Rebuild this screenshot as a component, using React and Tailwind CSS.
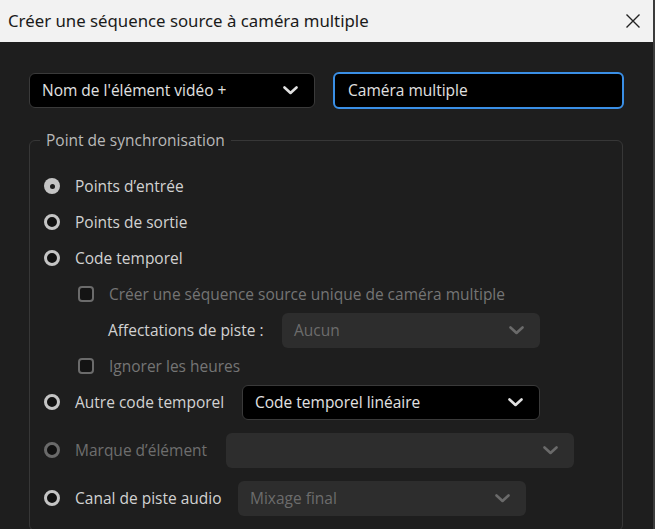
import React from 'react';

const FONT = { fontFamily: '"Open Sans", "Noto Sans", sans-serif' };

function Chevron({ dim }) {
  return (
    <svg width="15" height="9" viewBox="0 0 15 9" className={dim ? 'text-[#6a6a6a]' : 'text-[#e0e0e0]'}>
      <polyline points="1.5,1.5 7.5,7 13.5,1.5" fill="none" stroke="currentColor" strokeWidth="2.6" strokeLinecap="round" strokeLinejoin="round" />
    </svg>
  );
}

// menu déroulant, actif (noir) ou désactivé (gris)
function Select({ value, width, disabled }) {
  return (
    <div
      className={
        'h-[35px] shrink-0 flex items-center justify-between pl-3 pr-4 rounded-md text-[15.5px] ' +
        (disabled ? 'bg-[#2d2d2d] text-[#6c6c6c]' : 'bg-black border border-[#3a3a3a] text-[#e2e2e2]')
      }
      style={{ width }}
    >
      <span>{value}</span>
      <Chevron dim={disabled} />
    </div>
  );
}

function Radio({ checked, disabled }) {
  if (checked) {
    return (
      <span className="w-4 h-4 rounded-full bg-[#c4c4c4] flex items-center justify-center shrink-0">
        <span className="w-[5px] h-[5px] rounded-full bg-[#1c1c1c]" />
      </span>
    );
  }
  return (
    <span
      className={
        'w-4 h-4 rounded-full border-[3px] bg-[#111] shrink-0 ' +
        (disabled ? 'border-[#6a6a6a]' : 'border-[#c4c4c4]')
      }
    />
  );
}

function RadioRow({ label, checked, disabled, children, className = '' }) {
  return (
    <div className={'h-9 flex items-center ' + className}>
      <Radio checked={checked} disabled={disabled} />
      <span className={'ml-[15px] text-[15.5px] ' + (disabled ? 'text-[#6e6e6e]' : 'text-[#d2d2d2]')}>{label}</span>
      {children}
    </div>
  );
}

function CheckRow({ label }) {
  return (
    <div className="h-9 flex items-center pl-[34px]">
      <span className="w-4 h-4 rounded-[4px] border-2 border-[#6b6b6b] bg-[#141414] shrink-0" />
      <span className="ml-[15px] text-[15.5px] text-[#757575]">{label}</span>
    </div>
  );
}

export default function App() {
  return (
    <div className="w-[655px] h-[529px] overflow-hidden bg-[#1e1e1e] border-r-2 border-[#3c3c3c]" style={FONT}>
      {/* barre de titre */}
      <div
        className="h-[42px] bg-[#f2f2f2] flex items-center justify-between pl-2 pr-3"
        style={{ fontFamily: '"Noto Sans", "Open Sans", sans-serif' }}
      >
        <span className="text-[16.8px] text-[#1a1a1a]">Créer une séquence source à caméra multiple</span>
        <svg width="16" height="16" viewBox="0 0 16 16" className="text-[#222]">
          <path d="M1.5 1.5 L14.5 14.5 M14.5 1.5 L1.5 14.5" stroke="currentColor" strokeWidth="1.4" />
        </svg>
      </div>

      <div className="pl-[29px] pr-[29px] pt-[30px]">
        <div className="flex items-center gap-[18px]">
          <Select value="Nom de l'élément vidéo +" width={286} />
          <div className="h-[37px] w-[291px] shrink-0 rounded-md border-2 border-[#3a8fe6] bg-black flex items-center pl-[13px] text-[15.5px] text-[#e2e2e2]">
            Caméra multiple
          </div>
        </div>

        <fieldset className="mt-[20px] mr-[1px] h-[402px] border border-[#373737] rounded-md">
          <legend className="ml-[10px] px-[6px] text-[15.5px] text-[#b9b9b9]">Point de synchronisation</legend>
          <div className="pt-[16px] pl-[14px] flex flex-col">
            <RadioRow label="Points d’entrée" checked />
            <RadioRow label="Points de sortie" />
            <RadioRow label="Code temporel" />
            <CheckRow label="Créer une séquence source unique de caméra multiple" />
            <div className="h-9 flex items-center pl-[64px]">
              <span className="text-[15.5px] text-[#d2d2d2] w-[174px]">Affectations de piste :</span>
              <Select value="Aucun" width={258} disabled />
            </div>
            <CheckRow label="Ignorer les heures" />
            <RadioRow label="Autre code temporel">
              <div className="ml-auto mr-[82px]">
                <Select value="Code temporel linéaire" width={298} />
              </div>
            </RadioRow>
            <RadioRow label="Marque d’élément" disabled className="mt-3">
              <div className="ml-auto mr-[48px]">
                <Select value="" width={348} disabled />
              </div>
            </RadioRow>
            <RadioRow label="Canal de piste audio" className="mt-3">
              <div className="ml-auto mr-[96px]">
                <Select value="Mixage final" width={288} disabled />
              </div>
            </RadioRow>
          </div>
        </fieldset>
      </div>
    </div>
  );
}
